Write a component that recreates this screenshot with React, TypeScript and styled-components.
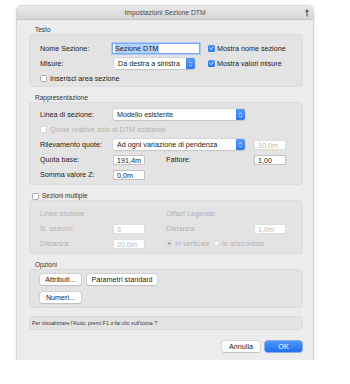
import React from "react";
import styled, { createGlobalStyle, css } from "styled-components";

const GlobalStyle = createGlobalStyle`
  body {
    margin: 0;
    background: #ffffff;
    font-family: "Liberation Sans", Arial, sans-serif;
    color: #222;
  }
`;

const Dialog = styled.div`
  margin: 6px 0 0 17px;
  width: 296px;
  height: 354px;
  background: #ececec;
  border-radius: 4px 4px 1px 1px;
  box-shadow: 0 0 0 0.5px #bdbdbd, 0 1px 4px rgba(0, 0, 0, 0.18);
  display: flex;
  flex-direction: column;
  overflow: hidden;
`;

const TitleBar = styled.div`
  height: 13px;
  display: grid;
  grid-template-columns: 1fr auto 1fr;
  align-items: center;
  background: linear-gradient(#e8e8e8, #d6d6d6);
  border-bottom: 1px solid #c6c6c6;
  font-size: 6.8px;
  color: #4a4a4a;
`;

const TitleText = styled.span`
  grid-column: 2;
`;

const PinIcon = styled.svg`
  grid-column: 3;
  justify-self: end;
  margin-right: 4px;
`;

const Body = styled.div`
  padding: 6px 10px 0 12px;
  display: flex;
  flex-direction: column;
  gap: 7px;
`;

const Section = styled.div`
  display: flex;
  flex-direction: column;
`;

const SectionTitle = styled.div`
  height: 8px;
  line-height: 8px;
  font-size: 6.5px;
  color: #333;
  padding-left: 6px;
  display: flex;
  align-items: center;
  gap: 3px;
`;

const Box = styled.div<{ $pt: number; $pb: number; $gap: number }>`
  background: #e3e3e3;
  border: 1px solid #dcdcdc;
  border-radius: 3px;
  padding: ${(p) => p.$pt}px 10px ${(p) => p.$pb}px 10px;
  display: flex;
  flex-direction: column;
  gap: ${(p) => p.$gap}px;
`;

const Row = styled.div`
  height: 11px;
  display: flex;
  align-items: center;
`;

const GridRow = styled.div`
  height: 11px;
  display: grid;
  grid-template-columns: 73px 32px 21px 88px 32px;
  align-items: center;
`;

const Label = styled.span<{ $w?: number; $disabled?: boolean; $col?: string }>`
  font-size: 7.2px;
  white-space: nowrap;
  color: ${(p) => (p.$disabled ? "#b2b2b2" : "#222")};
  ${(p) => p.$w !== undefined && css`width: ${p.$w}px; flex: none;`}
  ${(p) => p.$col && css`grid-column: ${p.$col};`}
`;

const Field = styled.div<{ $w: number; $disabled?: boolean; $focused?: boolean; $ml?: number }>`
  width: ${(p) => p.$w}px;
  height: 10px;
  box-sizing: border-box;
  flex: none;
  background: #fff;
  border: 0.5px solid ${(p) => (p.$disabled ? "#dedede" : "#c4c4c4")};
  font-size: 7.2px;
  line-height: 9px;
  padding-left: 3px;
  color: ${(p) => (p.$disabled ? "#b8b8b8" : "#222")};
  margin-left: ${(p) => p.$ml ?? 0}px;
  ${(p) =>
    p.$focused &&
    css`
      height: 11px;
      border: 1px solid #7eaaf2;
      box-shadow: 0 0 0 1px #a9c7f7;
      line-height: 9px;
      padding-left: 2px;
    `}
`;

const Highlight = styled.span`
  background: #b4d3fb;
`;

const Select = styled.div<{ $w: number; $ml?: number }>`
  width: ${(p) => p.$w}px;
  height: 11px;
  box-sizing: border-box;
  flex: none;
  display: flex;
  align-items: center;
  background: #fff;
  border-radius: 2px;
  box-shadow: 0 0 0 0.5px #c8c8c8, 0 0.5px 1px rgba(0, 0, 0, 0.15);
  font-size: 7.2px;
  color: #222;
  margin-left: ${(p) => p.$ml ?? 0}px;
  overflow: hidden;
`;

const SelectText = styled.span`
  flex: 1;
  padding-left: 4px;
  white-space: nowrap;
`;

const Stepper = styled.span`
  width: 9px;
  height: 100%;
  background: linear-gradient(#5a9bf8, #2f7af3);
  display: flex;
  align-items: center;
  justify-content: center;
`;

const Check = styled.span<{ $checked?: boolean; $disabled?: boolean }>`
  width: 7px;
  height: 7px;
  box-sizing: border-box;
  flex: none;
  border-radius: 1.5px;
  display: inline-flex;
  align-items: center;
  justify-content: center;
  background: ${(p) => (p.$checked ? "linear-gradient(#4e94f8, #2d78f2)" : "#fff")};
  border: ${(p) => (p.$checked ? "none" : `0.5px solid ${p.$disabled ? "#d4d4d4" : "#a9a9a9"}`)};
`;

const Radio = styled.span<{ $on?: boolean }>`
  width: 7px;
  height: 7px;
  box-sizing: border-box;
  flex: none;
  border-radius: 50%;
  border: 0.5px solid #cfcfcf;
  background: #f6f6f6;
  display: inline-flex;
  align-items: center;
  justify-content: center;
  &::after {
    content: "";
    width: 2.5px;
    height: 2.5px;
    border-radius: 50%;
    background: ${(p) => (p.$on ? "#a6a6a6" : "transparent")};
  }
`;

const CheckLabel = styled.label<{ $gap?: number }>`
  display: flex;
  align-items: center;
  gap: ${(p) => p.$gap ?? 2}px;
`;

const RadioGroup = styled.div`
  grid-column: 4 / 6;
  display: flex;
  align-items: center;
  gap: 3px;
`;

const Button = styled.div<{ $w: number; $primary?: boolean }>`
  width: ${(p) => p.$w}px;
  height: 11px;
  box-sizing: border-box;
  display: flex;
  align-items: center;
  justify-content: center;
  border-radius: 2.5px;
  font-size: 7.2px;
  background: #fff;
  color: #222;
  box-shadow: 0 0 0 0.5px #c4c4c4, 0 0.5px 1px rgba(0, 0, 0, 0.18);
  ${(p) =>
    p.$primary &&
    css`
      background: linear-gradient(#4f95f9, #1f6ff1);
      color: #fff;
      box-shadow: 0 0 0 0.5px #2a70e6;
    `}
`;

const ButtonRow = styled.div`
  display: flex;
  gap: 6px;
`;

const HelpBar = styled.div`
  margin-top: 1px;
  height: 14px;
  box-sizing: border-box;
  background: #e3e3e3;
  border: 1px solid #dcdcdc;
  border-radius: 3px;
  display: flex;
  align-items: center;
  padding-left: 2px;
  font-size: 5.3px;
  color: #333;
`;

const Footer = styled.div`
  margin-top: 4px;
  display: flex;
  justify-content: flex-end;
  gap: 5px;
  padding-right: 1px;
`;

const Tick = () => (
  <svg width="5" height="5" viewBox="0 0 10 10">
    <path d="M2 5.3 L4.2 7.5 L8 2.5" fill="none" stroke="#fff" strokeWidth="1.6" strokeLinecap="round" strokeLinejoin="round" />
  </svg>
);

const Chevrons = () => (
  <svg width="5" height="8" viewBox="0 0 10 16">
    <path d="M2.5 6 L5 3.5 L7.5 6 M2.5 10 L5 12.5 L7.5 10" fill="none" stroke="#fff" strokeWidth="1.4" strokeLinecap="round" strokeLinejoin="round" />
  </svg>
);

const DropDown = ({ w, ml, children }: { w: number; ml?: number; children: React.ReactNode }) => (
  <Select $w={w} $ml={ml}>
    <SelectText>{children}</SelectText>
    <Stepper>
      <Chevrons />
    </Stepper>
  </Select>
);

export default function App() {
  return (
    <>
      <GlobalStyle />
      <Dialog>
        <TitleBar>
          <TitleText>Impostazioni Sezione DTM</TitleText>
          <PinIcon width="4" height="8" viewBox="0 0 4 8">
            <circle cx="2" cy="2" r="1.5" fill="#555" />
            <path d="M2 3.2 V7.5 M2 5.5 H3" stroke="#555" strokeWidth="0.9" />
          </PinIcon>
        </TitleBar>
        <Body>
          <Section>
            <SectionTitle>Testo</SectionTitle>
            <Box $pt={8} $pb={2} $gap={4}>
              <Row>
                <Label $w={72}>Nome Sezione:</Label>
                <Field $w={88} $focused>
                  <Highlight>Sezione DTM</Highlight>
                </Field>
                <CheckLabel $gap={2} style={{ marginLeft: 8 }}>
                  <Check $checked>
                    <Tick />
                  </Check>
                  <Label>Mostra nome sezione</Label>
                </CheckLabel>
              </Row>
              <Row>
                <Label $w={74}>Misure:</Label>
                <DropDown w={81}>Da destra a sinistra</DropDown>
                <CheckLabel $gap={2} style={{ marginLeft: 13 }}>
                  <Check $checked>
                    <Tick />
                  </Check>
                  <Label>Mostra valori misure</Label>
                </CheckLabel>
              </Row>
              <Row>
                <CheckLabel $gap={3}>
                  <Check />
                  <Label>Inserisci area sezione</Label>
                </CheckLabel>
              </Row>
            </Box>
          </Section>

          <Section>
            <SectionTitle>Rappresentazione</SectionTitle>
            <Box $pt={6} $pb={4} $gap={4}>
              <Row>
                <Label $w={73}>Linea di sezione:</Label>
                <DropDown w={132}>Modello esistente</DropDown>
              </Row>
              <Row>
                <CheckLabel $gap={3}>
                  <Check $disabled />
                  <Label $disabled>Quote relative solo al DTM esistente</Label>
                </CheckLabel>
              </Row>
              <Row>
                <Label $w={73}>Rilevamento quote:</Label>
                <DropDown w={132}>Ad ogni variazione di pendenza</DropDown>
                <Field $w={32} $disabled $ml={9}>
                  10,0m
                </Field>
              </Row>
              <GridRow>
                <Label>Quota base:</Label>
                <Field $w={32}>191,4m</Field>
                <Label $col="4">Fattore:</Label>
                <Field $w={32}>1,00</Field>
              </GridRow>
              <GridRow>
                <Label>Somma valore Z:</Label>
                <Field $w={32}>0,0m</Field>
              </GridRow>
            </Box>
          </Section>

          <Section>
            <SectionTitle style={{ paddingLeft: 3 }}>
              <Check />
              <span>Sezioni multiple</span>
            </SectionTitle>
            <Box $pt={7} $pb={4} $gap={4}>
              <GridRow>
                <Label $disabled $col="1 / 3">
                  Linee sezione
                </Label>
                <Label $disabled $col="4">
                  Offset Legende
                </Label>
              </GridRow>
              <GridRow>
                <Label $disabled>N. sezioni:</Label>
                <Field $w={32} $disabled>
                  3
                </Field>
                <Label $disabled $col="4">
                  Distanza:
                </Label>
                <Field $w={32} $disabled>
                  1,0m
                </Field>
              </GridRow>
              <GridRow>
                <Label $disabled>Distanza:</Label>
                <Field $w={32} $disabled>
                  20,0m
                </Field>
                <RadioGroup>
                  <CheckLabel $gap={2}>
                    <Radio $on />
                    <Label $disabled>In verticale</Label>
                  </CheckLabel>
                  <CheckLabel $gap={2}>
                    <Radio />
                    <Label $disabled>In orizzontale</Label>
                  </CheckLabel>
                </RadioGroup>
              </GridRow>
            </Box>
          </Section>

          <Section>
            <SectionTitle>Opzioni</SectionTitle>
            <Box $pt={4} $pb={4} $gap={7}>
              <ButtonRow>
                <Button $w={41}>Attributi...</Button>
                <Button $w={70}>Parametri standard</Button>
              </ButtonRow>
              <ButtonRow>
                <Button $w={41}>Numeri...</Button>
              </ButtonRow>
            </Box>
          </Section>

          <HelpBar>Per visualizzare l'Aiuto, premi F1 o fai clic sull'icona ?</HelpBar>

          <Footer>
            <Button $w={38}>Annulla</Button>
            <Button $w={37} $primary>
              OK
            </Button>
          </Footer>
        </Body>
      </Dialog>
    </>
  );
}
